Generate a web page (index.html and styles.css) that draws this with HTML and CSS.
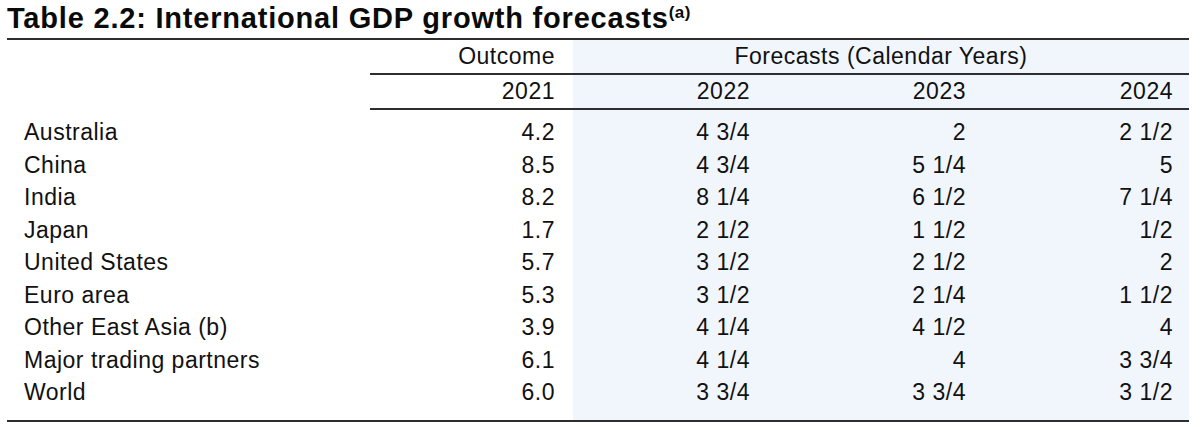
FILE: index.html
```html
<!DOCTYPE html>
<html lang="en">
<head>
<meta charset="utf-8">
<title>Table 2.2: International GDP growth forecasts</title>
<link rel="stylesheet" href="styles.css">
</head>
<body>
<h1 class="title">Table 2.2: International GDP growth forecasts<sup class="note">(a)</sup></h1>
<table class="gdp">
  <colgroup>
    <col class="c-label">
    <col class="c-out">
    <col class="c-f1">
    <col class="c-f2">
    <col class="c-f3">
  </colgroup>
  <thead>
    <tr class="hrow">
      <th class="blank"></th>
      <th class="num rule">Outcome</th>
      <th class="fc rule center" colspan="3">Forecasts (Calendar Years)</th>
    </tr>
    <tr class="hrow">
      <th class="blank"></th>
      <th class="num rule">2021</th>
      <th class="num fc rule">2022</th>
      <th class="num fc rule">2023</th>
      <th class="num fc rule last">2024</th>
    </tr>
  </thead>
  <tbody>
    <tr><td class="lbl">Australia</td><td class="num">4.2</td><td class="num fc">4 3/4</td><td class="num fc">2</td><td class="num fc last">2 1/2</td></tr>
    <tr><td class="lbl">China</td><td class="num">8.5</td><td class="num fc">4 3/4</td><td class="num fc">5 1/4</td><td class="num fc last">5</td></tr>
    <tr><td class="lbl">India</td><td class="num">8.2</td><td class="num fc">8 1/4</td><td class="num fc">6 1/2</td><td class="num fc last">7 1/4</td></tr>
    <tr><td class="lbl">Japan</td><td class="num">1.7</td><td class="num fc">2 1/2</td><td class="num fc">1 1/2</td><td class="num fc last">1/2</td></tr>
    <tr><td class="lbl">United States</td><td class="num">5.7</td><td class="num fc">3 1/2</td><td class="num fc">2 1/2</td><td class="num fc last">2</td></tr>
    <tr><td class="lbl">Euro area</td><td class="num">5.3</td><td class="num fc">3 1/2</td><td class="num fc">2 1/4</td><td class="num fc last">1 1/2</td></tr>
    <tr><td class="lbl">Other East Asia (b)</td><td class="num">3.9</td><td class="num fc">4 1/4</td><td class="num fc">4 1/2</td><td class="num fc last">4</td></tr>
    <tr><td class="lbl">Major trading partners</td><td class="num">6.1</td><td class="num fc">4 1/4</td><td class="num fc">4</td><td class="num fc last">3 3/4</td></tr>
    <tr><td class="lbl">World</td><td class="num">6.0</td><td class="num fc">3 3/4</td><td class="num fc">3 3/4</td><td class="num fc last">3 1/2</td></tr>
  </tbody>
</table>
</body>
</html>
```
FILE: styles.css
```css
html, body {
  margin: 0;
  padding: 0;
  background: #ffffff;
}

body {
  font-family: "Liberation Sans", Arial, Helvetica, sans-serif;
  color: #111111;
}

.title {
  margin: 2px 0 4px 7px;
  font-size: 29px;
  line-height: 32px;
  font-weight: bold;
  letter-spacing: 0.8px;
  color: #0a0a0a;
  white-space: nowrap;
}

.note {
  font-size: 17px;
  line-height: 0;
  letter-spacing: 0.4px;
  vertical-align: 10px;
}

.gdp {
  margin-left: 7px;
  width: 1182px;
  table-layout: fixed;
  border-collapse: collapse;
  border-top: 2px solid #2e2e2e;
  border-bottom: 2px solid #2e2e2e;
  font-size: 23px;
  letter-spacing: 0.5px;
}

.c-label { width: 363px; }
.c-out { width: 203px; }
.c-f1 { width: 195px; }
.c-f2 { width: 216px; }
.c-f3 { width: 205px; }

.gdp th,
.gdp td {
  padding: 0;
  font-weight: normal;
  white-space: nowrap;
}

.gdp .hrow th {
  line-height: 33px;
}

.gdp .rule {
  border-bottom: 2px solid #2e2e2e;
}

.gdp .num {
  text-align: right;
  padding-right: 18px;
}

.gdp .num.last {
  padding-right: 16px;
}

.gdp .center {
  text-align: center;
}

.gdp .fc {
  background: #f0f6fc;
}

.gdp td {
  line-height: 32.5px;
}

.gdp .lbl {
  padding-left: 17px;
}

.gdp tbody tr:first-child td {
  padding-top: 6px;
}

.gdp tbody tr:last-child td {
  padding-bottom: 11px;
}
```
